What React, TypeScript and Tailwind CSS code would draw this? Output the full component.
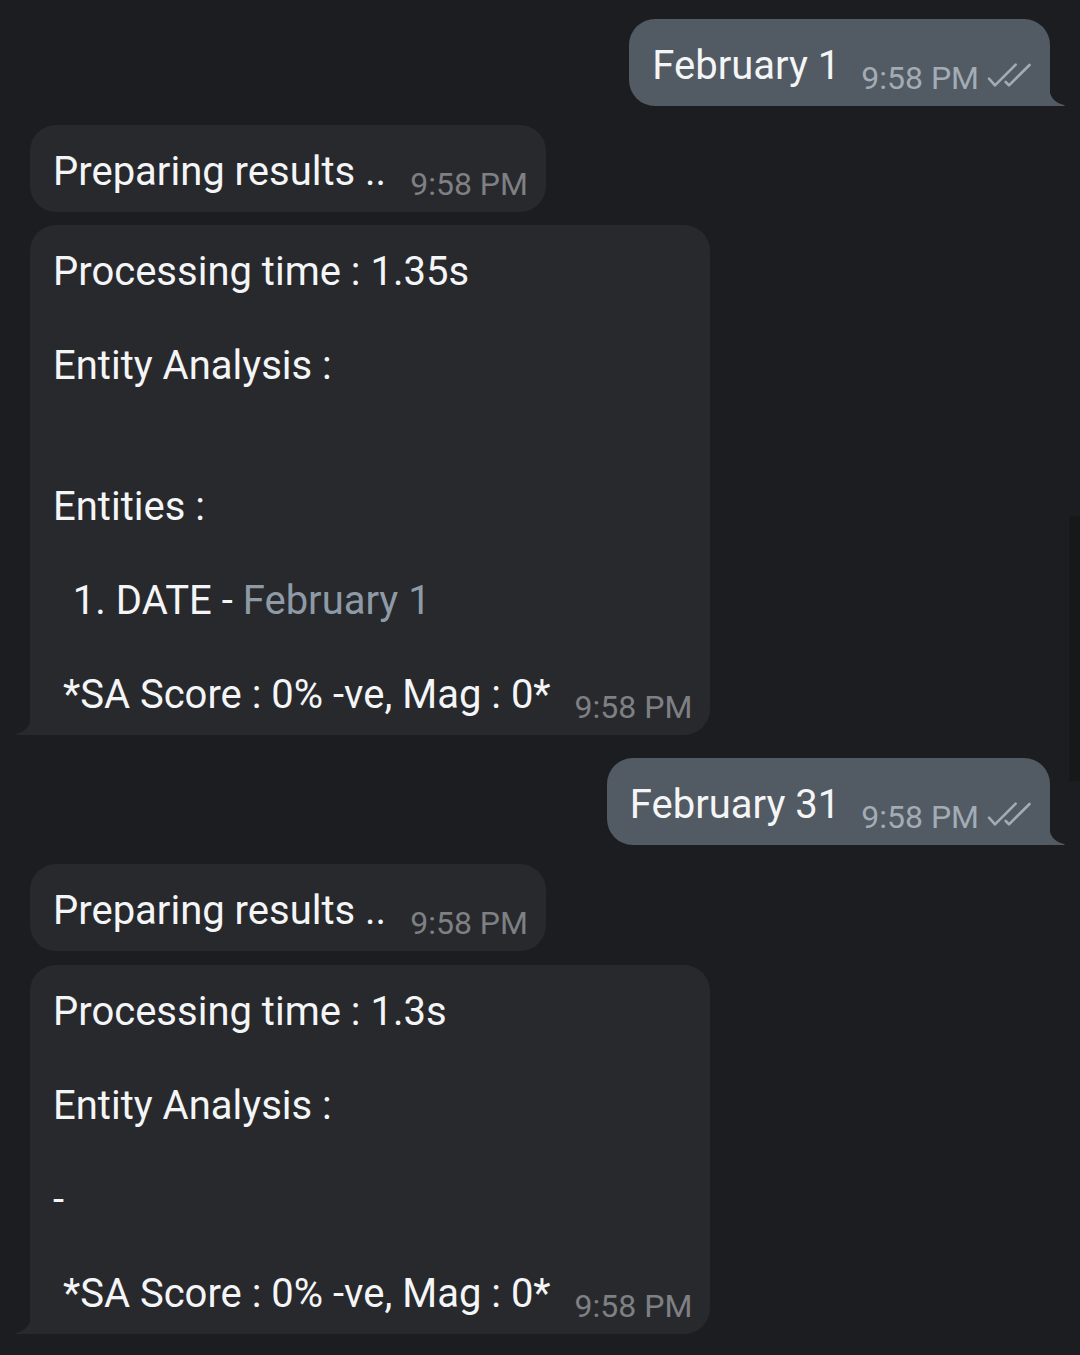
import React from 'react';

function Checks() {
  return (
    <svg width="48" height="30" viewBox="0 0 48 30" fill="none" className="ml-[6px] -translate-y-[3px]">
      <path d="M4 18.7 L10 25.3 L30.7 4.7" stroke="#a3acb5" strokeWidth="2.6" strokeLinecap="round" strokeLinejoin="round" />
      <path d="M20.7 22 L24 25.3 L44.5 5" stroke="#a3acb5" strokeWidth="2.6" strokeLinecap="round" strokeLinejoin="round" />
    </svg>
  );
}

function OutBubble({ text, mt }: { text: string; mt: string }) {
  return (
    <div className={`flex justify-end pr-[30px] ${mt}`}>
      <div className="relative flex items-end rounded-[26px] rounded-br-none bg-[#525a63] pt-[23px] pr-[17px] pb-[17px] pl-[23px]">
        <span className="text-[40px] leading-[47px] text-[#f4f5f6]">{text}</span>
        <span className="ml-[21px] flex translate-y-[7px] items-center text-[32px] leading-[36px] text-[#a3acb5]">
          9:58 PM
          <Checks />
        </span>
        <svg width="16" height="20" viewBox="0 0 16 20" className="absolute right-[-15px] bottom-0">
          <path d="M0 0 C0 11 6 17 15 19 C16 19.3 16 20 14.5 20 L0 20 Z" fill="#525a63" />
        </svg>
      </div>
    </div>
  );
}

function InBubble({ children, mt, tail }: { children: React.ReactNode; mt: string; tail?: boolean }) {
  return (
    <div className={`flex justify-start pl-[30px] ${mt}`}>
      <div
        className={`relative flex items-end rounded-[26px] bg-[#28292d] pt-[23px] pr-[18px] pb-[17px] pl-[23px] ${
          tail ? 'rounded-bl-none' : ''
        }`}
      >
        <div className="text-[40px] leading-[47px] whitespace-pre text-[#f4f5f6]">{children}</div>
        <span className="ml-[24px] translate-y-[7px] text-[32px] leading-[36px] text-[#7e8084]">9:58 PM</span>
        {tail && (
          <svg width="16" height="20" viewBox="0 0 16 20" className="absolute bottom-0 left-[-15px]">
            <path d="M16 0 C16 11 10 17 1 19 C0 19.3 0 20 1.5 20 L16 20 Z" fill="#28292d" />
          </svg>
        )}
      </div>
    </div>
  );
}

export default function App() {
  return (
    <div className="relative h-[1355px] w-full overflow-hidden bg-[#1c1d20] pt-[19px] font-[Roboto,sans-serif]">
      <OutBubble text="February 1" mt="" />

      <InBubble mt="mt-[19px]">Preparing results ..</InBubble>

      <InBubble mt="mt-[13px]" tail>
        {'Processing time : 1.35s\n\nEntity Analysis :\n\n\nEntities :\n\n  1. DATE - '}
        <span className="text-[#8e9ba7]">February 1</span>
        {'\n\n *SA Score : 0% -ve, Mag : 0*'}
      </InBubble>

      <OutBubble text="February 31" mt="mt-[23px]" />

      <InBubble mt="mt-[19px]">Preparing results ..</InBubble>

      <InBubble mt="mt-[14px]" tail>
        {'Processing time : 1.3s\n\nEntity Analysis :\n\n-\n\n *SA Score : 0% -ve, Mag : 0*'}
      </InBubble>

      {/* scroll indicator */}
      <div className="absolute top-[516px] right-0 h-[265px] w-[11px] bg-[#17181a]" />
    </div>
  );
}
